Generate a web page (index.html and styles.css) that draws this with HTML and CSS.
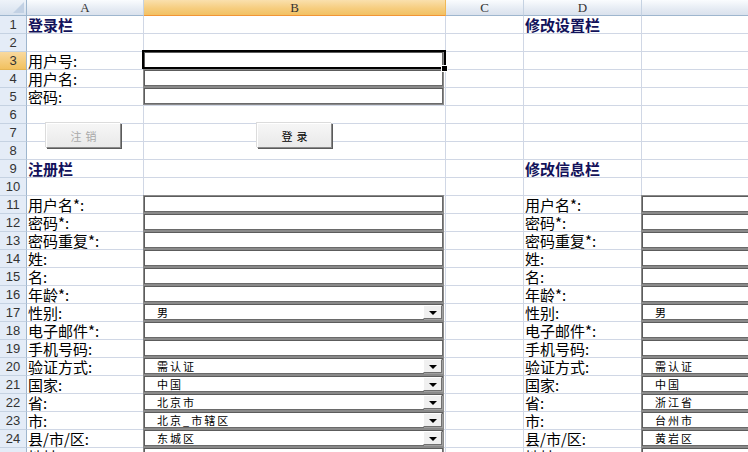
FILE: index.html
```html
<!DOCTYPE html>
<html lang="zh-CN">
<head>
<meta charset="utf-8">
<title>Sheet</title>
<link rel="stylesheet" href="styles.css">
</head>
<body>
<div class="sheet">
  <div class="row hdr">
    <div class="corner"><span class="tri"></span></div>
    <div class="ch">A</div>
    <div class="ch sel">B</div>
    <div class="ch">C</div>
    <div class="ch">D</div>
    <div class="ch">E</div>
  </div>

  <div class="row"><div class="rh">1</div><div class="c"><span class="h">登录栏</span></div><div class="c"></div><div class="c"></div><div class="c"><span class="h">修改设置栏</span></div><div class="c"></div></div>
  <div class="row"><div class="rh">2</div><div class="c"></div><div class="c"></div><div class="c"></div><div class="c"></div><div class="c"></div></div>
  <div class="row"><div class="rh sel">3</div><div class="c"><span class="lbl">用户号:</span></div><div class="c active"><div class="tb"></div></div><div class="c"></div><div class="c"></div><div class="c"></div></div>
  <div class="row"><div class="rh">4</div><div class="c"><span class="lbl">用户名:</span></div><div class="c"><div class="tb"></div></div><div class="c"></div><div class="c"></div><div class="c"></div></div>
  <div class="row"><div class="rh">5</div><div class="c"><span class="lbl">密码:</span></div><div class="c"><div class="tb"></div></div><div class="c"></div><div class="c"></div><div class="c"></div></div>
  <div class="row"><div class="rh">6</div><div class="c"></div><div class="c"></div><div class="c"></div><div class="c"></div><div class="c"></div></div>
  <div class="row"><div class="rh">7</div><div class="c"></div><div class="c"></div><div class="c"></div><div class="c"></div><div class="c"></div></div>
  <div class="row"><div class="rh">8</div><div class="c"></div><div class="c"></div><div class="c"></div><div class="c"></div><div class="c"></div></div>
  <div class="row"><div class="rh">9</div><div class="c"><span class="h">注册栏</span></div><div class="c"></div><div class="c"></div><div class="c"><span class="h">修改信息栏</span></div><div class="c"></div></div>
  <div class="row"><div class="rh">10</div><div class="c"></div><div class="c"></div><div class="c"></div><div class="c"></div><div class="c"></div></div>
  <div class="row"><div class="rh">11</div><div class="c"><span class="lbl">用户名*:</span></div><div class="c"><div class="tb"></div></div><div class="c"></div><div class="c"><span class="lbl">用户名*:</span></div><div class="c"><div class="tb"></div></div></div>
  <div class="row"><div class="rh">12</div><div class="c"><span class="lbl">密码*:</span></div><div class="c"><div class="tb"></div></div><div class="c"></div><div class="c"><span class="lbl">密码*:</span></div><div class="c"><div class="tb"></div></div></div>
  <div class="row"><div class="rh">13</div><div class="c"><span class="lbl">密码重复*:</span></div><div class="c"><div class="tb"></div></div><div class="c"></div><div class="c"><span class="lbl">密码重复*:</span></div><div class="c"><div class="tb"></div></div></div>
  <div class="row"><div class="rh">14</div><div class="c"><span class="lbl">姓:</span></div><div class="c"><div class="tb"></div></div><div class="c"></div><div class="c"><span class="lbl">姓:</span></div><div class="c"><div class="tb"></div></div></div>
  <div class="row"><div class="rh">15</div><div class="c"><span class="lbl">名:</span></div><div class="c"><div class="tb"></div></div><div class="c"></div><div class="c"><span class="lbl">名:</span></div><div class="c"><div class="tb"></div></div></div>
  <div class="row"><div class="rh">16</div><div class="c"><span class="lbl">年龄*:</span></div><div class="c"><div class="tb"></div></div><div class="c"></div><div class="c"><span class="lbl">年龄*:</span></div><div class="c"><div class="tb"></div></div></div>
  <div class="row"><div class="rh">17</div><div class="c"><span class="lbl">性别:</span></div><div class="c"><div class="tb cb"><span class="val">男</span><span class="dd"><i></i></span></div></div><div class="c"></div><div class="c"><span class="lbl">性别:</span></div><div class="c"><div class="tb cb"><span class="val">男</span><span class="dd"><i></i></span></div></div></div>
  <div class="row"><div class="rh">18</div><div class="c"><span class="lbl">电子邮件*:</span></div><div class="c"><div class="tb"></div></div><div class="c"></div><div class="c"><span class="lbl">电子邮件*:</span></div><div class="c"><div class="tb"></div></div></div>
  <div class="row"><div class="rh">19</div><div class="c"><span class="lbl">手机号码:</span></div><div class="c"><div class="tb"></div></div><div class="c"></div><div class="c"><span class="lbl">手机号码:</span></div><div class="c"><div class="tb"></div></div></div>
  <div class="row"><div class="rh">20</div><div class="c"><span class="lbl">验证方式:</span></div><div class="c"><div class="tb cb"><span class="val">需认证</span><span class="dd"><i></i></span></div></div><div class="c"></div><div class="c"><span class="lbl">验证方式:</span></div><div class="c"><div class="tb cb"><span class="val">需认证</span><span class="dd"><i></i></span></div></div></div>
  <div class="row"><div class="rh">21</div><div class="c"><span class="lbl">国家:</span></div><div class="c"><div class="tb cb"><span class="val">中国</span><span class="dd"><i></i></span></div></div><div class="c"></div><div class="c"><span class="lbl">国家:</span></div><div class="c"><div class="tb cb"><span class="val">中国</span><span class="dd"><i></i></span></div></div></div>
  <div class="row"><div class="rh">22</div><div class="c"><span class="lbl">省:</span></div><div class="c"><div class="tb cb"><span class="val">北京市</span><span class="dd"><i></i></span></div></div><div class="c"></div><div class="c"><span class="lbl">省:</span></div><div class="c"><div class="tb cb"><span class="val">浙江省</span><span class="dd"><i></i></span></div></div></div>
  <div class="row"><div class="rh">23</div><div class="c"><span class="lbl">市:</span></div><div class="c"><div class="tb cb"><span class="val">北京_市辖区</span><span class="dd"><i></i></span></div></div><div class="c"></div><div class="c"><span class="lbl">市:</span></div><div class="c"><div class="tb cb"><span class="val">台州市</span><span class="dd"><i></i></span></div></div></div>
  <div class="row"><div class="rh">24</div><div class="c"><span class="lbl">县/市/区:</span></div><div class="c"><div class="tb cb"><span class="val">东城区</span><span class="dd"><i></i></span></div></div><div class="c"></div><div class="c"><span class="lbl">县/市/区:</span></div><div class="c"><div class="tb cb"><span class="val">黄岩区</span><span class="dd"><i></i></span></div></div></div>
  <div class="row"><div class="rh">25</div><div class="c"><span class="lbl">地址:</span></div><div class="c"><div class="tb"></div></div><div class="c"></div><div class="c"><span class="lbl">地址:</span></div><div class="c"><div class="tb"></div></div></div>

  <div class="btn btn-logout">注销</div>
  <div class="btn btn-login">登录</div>
</div>
</body>
</html>
```

FILE: styles.css
```css
html, body {
  margin: 0;
  padding: 0;
  background: #ffffff;
}

.sheet {
  position: relative;
  width: 748px;
  height: 452px;
  overflow: hidden;
  font-family: "Noto Sans CJK SC", "Noto Sans", sans-serif;
  color: #000;
}

.row {
  display: grid;
  grid-template-columns: 27px 117px 302px 78px 118px 302px;
  height: 18px;
}

.row.hdr {
  height: 16px;
}

.corner {
  box-sizing: border-box;
  background: linear-gradient(#eef3f9, #d7e1ee);
  border-right: 1px solid #9eb6ce;
  border-bottom: 1px solid #9eb6ce;
  position: relative;
  overflow: hidden;
}

.corner .tri {
  position: absolute;
  right: 2px;
  bottom: 2px;
  width: 0;
  height: 0;
  border-left: 11px solid transparent;
  border-bottom: 11px solid #c2d1e4;
}

.ch {
  box-sizing: border-box;
  background: linear-gradient(#fafcfe, #e5ebf3 60%, #dae2ed);
  border-right: 1px solid #c5d2e2;
  border-bottom: 1px solid #9eb6ce;
  font-family: "Liberation Serif", serif;
  font-size: 13px;
  color: #333;
  display: flex;
  align-items: center;
  justify-content: center;
  line-height: 15px;
}

.ch.sel {
  background: linear-gradient(#fae0ad, #f6cd7f 55%, #f2c163);
  border-bottom: 1px solid #f29536;
  border-right-color: #f0b856;
}

.rh {
  box-sizing: border-box;
  background: #e4ecf7;
  border-right: 1px solid #9eb6ce;
  border-bottom: 1px solid #c5d2e2;
  font-family: "Liberation Sans", sans-serif;
  font-size: 13px;
  color: #333;
  display: flex;
  align-items: center;
  justify-content: center;
  line-height: 17px;
}

.rh.sel {
  background: linear-gradient(#f9d99f, #f1c15f);
  border-bottom-color: #e4b453;
}

.c {
  box-sizing: border-box;
  border-right: 1px solid #d0d7e5;
  border-bottom: 1px solid #d0d7e5;
  display: flex;
  align-items: flex-end;
  position: relative;
  min-width: 0;
}

.lbl {
  padding-left: 1px;
  font-size: 15px;
  line-height: 16px;
  white-space: nowrap;
}

.h {
  padding-left: 1px;
  font-size: 15px;
  font-weight: bold;
  color: #12125a;
  line-height: 16px;
  white-space: nowrap;
}

.tb {
  align-self: flex-start;
  box-sizing: border-box;
  margin: -1px 0 0 -1px;
  width: 301px;
  height: 18px;
  border: 1px solid #8a8a8a;
  box-shadow: inset 1px 1px 0 #5c5c5c, inset -1px -1px 0 #6a6a6a;
  background: #fff;
  display: flex;
  align-items: center;
  position: relative;
  flex-shrink: 0;
}

.cb .val {
  padding-left: 13px;
  font-size: 11px;
  letter-spacing: 2px;
  line-height: 14px;
  white-space: nowrap;
  flex: 1;
}

.cb .dd {
  width: 19px;
  height: 14px;
  margin-right: 1px;
  box-sizing: border-box;
  background: #f0f0f0;
  border-top: 1px solid #ffffff;
  border-left: 1px solid #ffffff;
  border-right: 1px solid #707070;
  border-bottom: 1px solid #707070;
  box-shadow: 1px 1px 0 #a0a0a0;
  display: flex;
  align-items: center;
  justify-content: center;
}

.cb .dd i {
  display: block;
  width: 0;
  height: 0;
  border-left: 4px solid transparent;
  border-right: 4px solid transparent;
  border-top: 4px solid #000;
  margin-top: 1px;
}

.active::after {
  content: "";
  position: absolute;
  left: -2px;
  top: -2px;
  right: -1px;
  bottom: 0px;
  border: 2px solid #000;
  pointer-events: none;
}

.active::before {
  content: "";
  position: absolute;
  right: -3px;
  bottom: -3px;
  width: 5px;
  height: 5px;
  background: #000;
  border: 1px solid #fff;
  z-index: 2;
}

.btn {
  position: absolute;
  top: 123px;
  width: 75px;
  height: 25px;
  box-sizing: border-box;
  background: linear-gradient(#f6f6f6, #e9e9e9);
  border-top: 1px solid #ffffff;
  border-left: 1px solid #ffffff;
  border-right: 1px solid #8a8a8a;
  border-bottom: 1px solid #8a8a8a;
  box-shadow: 1px 1px 0 #5a5a5a, -1px -1px 0 #dcdcdc;
  font-size: 11px;
  letter-spacing: 4px;
  text-indent: 4px;
  display: flex;
  align-items: center;
  justify-content: center;
  line-height: 14px;
}

.btn-logout {
  left: 46px;
  color: #a8a8a8;
}

.btn-login {
  left: 257px;
  color: #000;
}
```
